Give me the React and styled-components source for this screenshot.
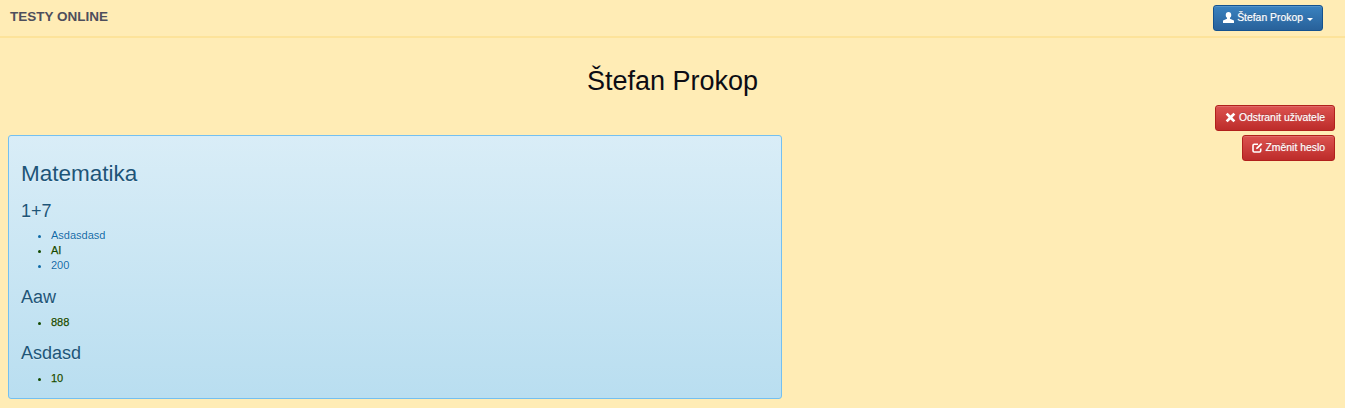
import React from "react";
import styled, { createGlobalStyle } from "styled-components";

const Global = createGlobalStyle`
  html, body { margin: 0; padding: 0; }
  body {
    background: #ffecb5;
    font-family: "Liberation Sans", Arial, sans-serif;
    font-size: 11px;
    color: #222;
  }
`;

const Navbar = styled.nav`
  height: 38px;
  box-sizing: border-box;
  display: flex;
  align-items: flex-start;
  justify-content: space-between;
  padding: 5px 22px 0 10px;
  border-bottom: 2px solid #fde39a;
`;

const Brand = styled.div`
  font-size: 13.5px;
  font-weight: 700;
  line-height: 14px;
  padding-top: 5px;
  color: #4e4e5c;
`;

const Button = styled.button`
  display: inline-flex;
  align-items: center;
  gap: 3px;
  height: 26px;
  box-sizing: border-box;
  padding: 0 9px;
  border-radius: 3px;
  border: 1px solid ${(p) => (p.$kind === "primary" ? "#14528f" : "#b1201c")};
  background: ${(p) =>
    p.$kind === "primary"
      ? "linear-gradient(to bottom, #3a82c0 0%, #28619a 100%)"
      : "linear-gradient(to bottom, #dc5350 0%, #bd2c2a 100%)"};
  color: #fff;
  font-family: inherit;
  font-size: 10.4px;
  line-height: 14px;
  white-space: nowrap;
  text-shadow: 0 -1px 0 rgba(0, 0, 0, 0.2), 0 0 1px rgba(255, 255, 255, 0.6);
  box-shadow: inset 0 1px 0 rgba(255, 255, 255, 0.15);
`;

const Caret = styled.span`
  width: 0;
  height: 0;
  margin-left: 1px;
  margin-top: 2px;
  border-top: 3px solid #fff;
  border-left: 3px solid transparent;
  border-right: 3px solid transparent;
`;

const Glyph = styled.svg`
  flex: none;
  margin-top: -2px;
`;

const Title = styled.h1`
  margin: 0;
  padding-top: 26px;
  height: 67px;
  box-sizing: border-box;
  text-align: center;
  font-size: 27px;
  font-weight: 400;
  line-height: 34px;
  color: #0c0c14;
`;

const Content = styled.div`
  display: flex;
  justify-content: space-between;
  align-items: flex-start;
  padding: 0 10px 0 8px;
`;

const Actions = styled.div`
  display: flex;
  flex-direction: column;
  align-items: flex-end;
  gap: 4px;
`;

const Well = styled.section`
  width: 774px;
  height: 264px;
  box-sizing: border-box;
  margin-top: 30px;
  padding: 24px 12px 0;
  border: 1px solid #74c0f0;
  border-radius: 3px;
  background: linear-gradient(to bottom, #d9edf7 0%, #b9def0 100%);
  color: #1d5578;
  text-shadow: 0 1px 0 rgba(255, 255, 255, 0.35);
`;

const Subject = styled.h2`
  margin: 0 0 13px;
  font-size: 22.5px;
  font-weight: 400;
  line-height: 28px;
  color: #1d5578;
`;

const Question = styled.h3`
  margin: 0 0 ${(p) => p.$gap || 7}px;
  font-size: 18px;
  font-weight: 400;
  line-height: 20px;
  color: #1d5578;
`;

const List = styled.ul`
  margin: 0 0 ${(p) => p.$gap || 14}px;
  padding: 0 0 0 30px;
`;

const Item = styled.li`
  font-size: 11px;
  line-height: 15px;
  color: ${(p) => (p.$right ? "#134a00" : "#0f6aa6")};
  -webkit-text-stroke: ${(p) => (p.$right ? "0.25px #134a00" : "0")};
  text-shadow: 0 0 1px #fff;
`;

const UserIcon = () => (
  <Glyph width="11" height="11" viewBox="0 0 12 12" fill="#fff">
    <path d="M6 0c-1.900 0-3 1.300-3 3.200 0 1.400 0.500 2.500 1.400 3.100v1L0 9.200V12h12V9.200L7.600 7.300v-1c0.900-0.600 1.400-1.700 1.400-3.100C9 1.300 7.900 0 6 0z" />
  </Glyph>
);

const RemoveIcon = () => (
  <Glyph width="11" height="11" viewBox="0 0 11 11" fill="#fff">
    <path d="M2.600 0.700L5.500 3.600 8.400 0.700 10.300 2.600 7.400 5.500 10.300 8.400 8.400 10.300 5.500 7.400 2.600 10.300 0.700 8.400 3.600 5.500 0.700 2.600z" />
  </Glyph>
);

const EditIcon = () => (
  <Glyph width="11" height="11" viewBox="0 0 11 11" fill="none" stroke="#fff">
    <path d="M8.700 6.500v2.300a1.200 1.200 0 0 1-1.200 1.200H2.200A1.200 1.200 0 0 1 1 8.800V3.500a1.200 1.200 0 0 1 1.200-1.200H6" strokeWidth="1.600" />
    <path d="M4 7.300l0.500-1.900L9 0.900l1.300 1.300-4.500 4.600z" fill="#fff" stroke="none" />
  </Glyph>
);

export default function App() {
  return (
    <>
      <Global />
      <Navbar>
        <Brand>TESTY ONLINE</Brand>
        <Button $kind="primary">
          <UserIcon />
          Štefan Prokop
          <Caret />
        </Button>
      </Navbar>
      <Title>Štefan Prokop</Title>
      <Content>
        <Well>
          <Subject>Matematika</Subject>
          <Question>1+7</Question>
          <List>
            <Item>Asdasdasd</Item>
            <Item $right>AI</Item>
            <Item>200</Item>
          </List>
          <Question $gap={8}>Aaw</Question>
          <List $gap={13}>
            <Item $right>888</Item>
          </List>
          <Question $gap={8}>Asdasd</Question>
          <List>
            <Item $right>10</Item>
          </List>
        </Well>
        <Actions>
          <Button $kind="danger">
            <RemoveIcon />
            Odstranit uživatele
          </Button>
          <Button $kind="danger">
            <EditIcon />
            Změnit heslo
          </Button>
        </Actions>
      </Content>
    </>
  );
}
